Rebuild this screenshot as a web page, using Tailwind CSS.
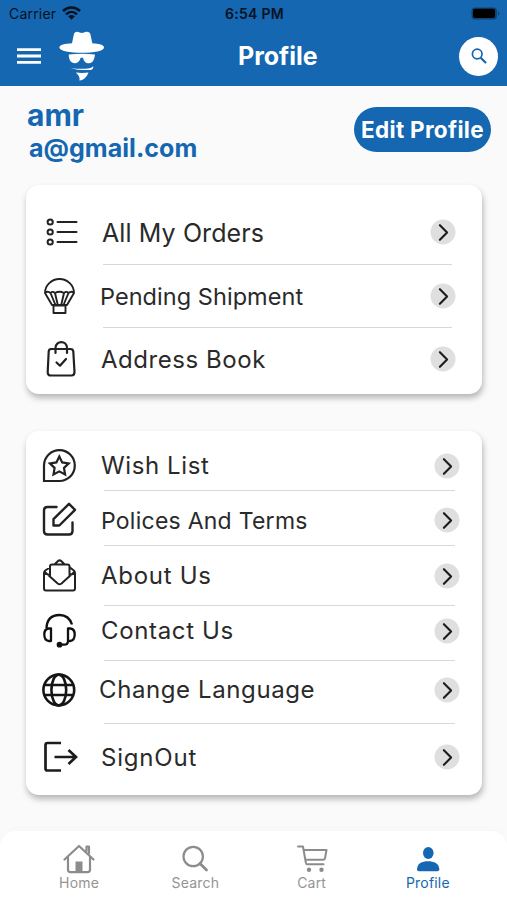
<!DOCTYPE html>
<html lang="en">
<head>
<meta charset="utf-8">
<title>Profile</title>
<script src="https://cdn.jsdelivr.net/npm/@tailwindcss/browser@4"></script>
</head>
<body class="w-[507px] h-[900px] overflow-hidden bg-[#fafafa] font-['Inter','Liberation_Sans',sans-serif] text-[#2a2a2a] flex flex-col">
<svg class="hidden">
  <symbol id="go" viewBox="0 0 26 26"><circle cx="13" cy="13" r="12.5" fill="#dfdfdf"/><path d="M9.6 6L16.8 13.3L9.6 20.6" transform="translate(.3 .2)" fill="none" stroke="#1c1c1c" stroke-width="2.1" stroke-linecap="round" stroke-linejoin="round"/></symbol>
</svg>

<header class="h-[86px] shrink-0 bg-[#1467b0] flex flex-col">
  <div class="h-7 flex items-center justify-between text-[#06121e]">
    <div class="w-[200px] pl-[9px] flex items-center gap-[6px]">
      <span class="text-[14px] leading-7 tracking-[0.2px]">Carrier</span>
      <svg class="w-[19px] h-[14px] -mt-[2px]" viewBox="0 0 19 14" fill="none" stroke="currentColor"><path d="M1 5C6 .3 13 .3 18 5" stroke-width="2.7"/><path d="M4 8.3C7.300 5.200 11.700 5.200 15 8.300" stroke-width="2.500"/><path d="M6.200 10.300Q9.500 7.700 12.800 10.300L9.500 13.700Z" fill="currentColor" stroke="none"/></svg>
    </div>
    <span class="pl-[2px] text-[14px] leading-7 font-semibold tracking-[0.300px]">6:54 PM</span>
    <div class="w-[200px] pr-[7px] flex justify-end">
      <svg class="w-[30px] h-[14px]" viewBox="0 0 30 14"><rect x="1.500" y=".5" width="25.500" height="12" rx="3.500" fill="#0d4476"/><rect x="3" y="1.800" width="22" height="9.200" rx="2" fill="#000"/><path d="M28 4.500v4q1.500-.5 1.500-2T28 4.500" fill="#0d4476"/></svg>
    </div>
  </div>
  <div class="h-[56px] flex items-center pl-[17px] pr-[9px]">
    <div class="w-[221px] flex items-center gap-[18px]">
      <svg class="w-6 h-[18px]" viewBox="0 0 24 18" fill="#fff"><path d="M0 1.200h24v2.800H0zM0 7.600h24v2.800H0zM0 14h24v2.800H0z"/></svg>
      <svg class="w-[46px] h-[50px] -mt-[1px]" viewBox="0 0 46 50" fill="#fff">
        <path d="M14.700 4C15.100 1.500 16.200.8 18.500.8Q23 3.100 27 .8C29.600.6 31.200 1.600 31.600 4L33.300 12.300C40 12.600 45 14 45 16.500C45 20 35 21.800 23 21.800S.4 20 .4 16.500C.4 14 6 12.600 13 12.300Z"/>
        <path d="M9.700 23.500Q23 22 36 23.500L35.500 26.500C34.500 31 31.500 33 28.500 32.200C25.500 31.500 24.500 29 24 26.700H21.600C21 29.500 19.500 31.700 16.500 32.200C13 32.500 10.700 30.500 10 26.500Z"/>
        <path d="M11.300 36.900Q23 38.500 30.500 37.200Q33 36.600 34.200 35.200C34.600 38.300 32.500 39 30 39Q20 39.600 11.300 36.900Z"/>
        <path d="M16.800 41.600Q23 42.500 29.500 41.600C28 45.600 24.500 49.800 20.400 49.600Q21.500 46 16.800 41.600Z"/>
      </svg>
    </div>
    <h1 class="text-[25px] leading-8 font-bold text-white">Profile</h1>
    <div class="ml-auto">
      <button class="w-[39px] h-[39px] rounded-full bg-white flex items-center justify-center" aria-label="Search">
        <svg class="w-4 h-4 ml-px" viewBox="0 0 16 16" fill="none" stroke="#1467b0"><circle cx="6.200" cy="6" r="4.800" stroke-width="1.700"/><path d="M9.700 9.700L15 15" stroke-width="2.200"/></svg>
      </button>
    </div>
  </div>
</header>

<section class="h-[99px] shrink-0 flex justify-between pl-[27px] pr-[16px] text-[#1467b0]">
  <div class="pt-[12px]">
    <p class="text-[30px] leading-[34px] font-bold">amr</p>
    <p class="text-[25px] leading-[32px] font-bold pl-[2px] tracking-[0.050px]">a@gmail.com</p>
  </div>
  <button class="mt-[21px] w-[137px] h-[45px] rounded-full bg-[#1467b0] text-white text-[22.500px] font-bold tracking-[0.300px] whitespace-nowrap flex items-center justify-center pt-[1px]">Edit Profile</button>
</section>

<main class="px-[26px] shrink-0 text-[24px] leading-8 whitespace-nowrap">
  <section class="h-[209px] w-[455.500px] rounded-[13px] bg-white shadow-[1px_4px_6px_rgba(0,0,0,0.28)] pl-[16px] pr-[26px]">
    <div class="h-[79px] pt-[15px] flex items-center">
      <svg class="w-9 h-9" viewBox="0 0 36 36" fill="none" stroke="#222" stroke-width="2"><circle cx="8.200" cy="8" r="2.600"/><circle cx="8.200" cy="18" r="2.600"/><circle cx="8.200" cy="28" r="2.600"/><path d="M15.500 8H34.500M15.500 18H34.500M15.500 28H34.500" stroke-linecap="round"/></svg>
      <span class="ml-[24px] pt-[2px] grow text-[25px] tracking-[0.100px]">All My Orders</span>
      <svg class="w-[26px] h-[26px]"><use href="#go"/></svg>
    </div>
    <div class="h-px ml-[61px] mr-[4px] bg-[#d8d8d8]"></div>
    <div class="h-[62px] flex items-center">
      <svg class="w-9 h-9" viewBox="0 0 36 36" fill="none" stroke="#222" stroke-width="1.900" stroke-linejoin="round"><path d="M3 15A14.500 14 0 0 1 32 15L25 27H10ZM3 15Q5.500 12.500 8.500 15Q10.500 12.700 13 15Q17.500 12.500 22 15Q24.500 12.700 26.500 15Q29.500 12.500 32 15M8.500 15L13.500 27M13 15L15.800 27M22 15L19.200 27M26.500 15L21.500 27M11.500 27.500H23.500V35H11.500Z"/></svg>
      <span class="ml-[22px] pt-[1px] grow text-[23.500px] tracking-[0.050px]">Pending Shipment</span>
      <svg class="w-[26px] h-[26px]"><use href="#go"/></svg>
    </div>
    <div class="h-px ml-[61px] mr-[4px] bg-[#d8d8d8]"></div>
    <div class="h-[62px] flex items-center">
      <svg class="w-9 h-9" viewBox="0 0 36 36" fill="none" stroke="#222" stroke-width="2.200" stroke-linecap="round" stroke-linejoin="round"><path d="M9 8H28.500Q31 8 31.300 10.500L32.500 31Q32.500 34.500 29.500 34.500H9Q5.500 34.500 5.700 31L6.700 10.500Q7 8 9 8ZM13.500 12V7C13.500-.8 25 -.8 25 7V12M14.500 21.500L18 24.700L24 18"/></svg>
      <span class="ml-[23px] pt-[1px] grow tracking-[0.550px]">Address Book</span>
      <svg class="w-[26px] h-[26px]"><use href="#go"/></svg>
    </div>
  </section>

  <section class="mt-[37px] h-[364px] w-[455.500px] rounded-[13px] bg-white shadow-[1px_4px_6px_rgba(0,0,0,0.28)] pl-[16px] pr-[22px]">
    <div class="h-[59px] pt-[10px] flex items-center">
      <svg class="w-9 h-9" viewBox="0 0 36 36" fill="none" stroke="#222" stroke-width="2.200" stroke-linejoin="miter"><path d="M2 33V17.200A15.400 15.400 0 1 1 17.400 33Z"/><path d="M17.300 8.500L20.200 14.400L26.700 15.400L22 20L23.100 26.500L17.300 23.400L11.500 26.500L12.600 20L7.900 15.400L14.400 14.400Z"/></svg>
      <span class="ml-[23px] pt-[1px] grow tracking-[0.600px]">Wish List</span>
      <svg class="w-[26px] h-[26px]"><use href="#go"/></svg>
    </div>
    <div class="h-px ml-[62px] mr-[5px] bg-[#d8d8d8]"></div>
    <div class="h-[54px] pt-[4px] flex items-center">
      <svg class="w-9 h-9" viewBox="0 0 36 36" fill="none" stroke="#222" stroke-width="2.400" stroke-linejoin="round" stroke-linecap="round"><path d="M14.500 5H5.500Q2 5 2 8.500V29Q2 32.500 5.500 32.500H27Q30.500 32.500 30.500 29V20.500M11.500 23.500V17.200L27 1.800L33 7.800L17.300 23.500Z"/></svg>
      <span class="ml-[23px] pt-[2px] grow text-[23px] tracking-[0.250px]">Polices And Terms</span>
      <svg class="w-[26px] h-[26px]"><use href="#go"/></svg>
    </div>
    <div class="h-px ml-[62px] mr-[5px] bg-[#d8d8d8]"></div>
    <div class="h-[59px] flex items-center">
      <svg class="w-9 h-9" viewBox="0 0 36 36" fill="none" stroke="#222" stroke-width="2" stroke-linejoin="round"><path d="M2 15V30.500Q2 32.500 4 32.500H31Q33 32.500 33 30.500V15Q33 13.500 31.800 12.500L28 9.500M8 9.500L3.200 12.500Q2 13.500 2 15L8 17.200M33 15L27.500 17.200M8 18.500V8.500Q8 6.500 10 6.500H25.500Q27.500 6.500 27.500 8.500V18.500M2.500 13.800L15.700 25.500Q17.600 27 19.500 25.500L32.500 13.800M12.500 6.500L16 3Q17.600 1.700 19.200 3L22.700 6.500"/></svg>
      <span class="ml-[23px] pt-[1px] grow tracking-[0.700px]">About Us</span>
      <svg class="w-[26px] h-[26px]"><use href="#go"/></svg>
    </div>
    <div class="h-px ml-[62px] mr-[5px] bg-[#d8d8d8]"></div>
    <div class="h-[54px] pb-[5px] flex items-center">
      <svg class="w-9 h-9" viewBox="0 0 36 36" fill="none" stroke="#111" stroke-width="2.300" stroke-linejoin="round"><path d="M4.500 15C5 6 10 2 17.500 2C24 2 28 5.500 30 11.500M9 15.500H6.500Q2.300 16 2.300 21.500T6.500 28H9ZM26 15.500H28.500Q32.700 16 32.700 21.500T28.500 28H26ZM26 28Q26 31.700 22 31.700H18"/><circle cx="17.500" cy="31.700" r="1.700" fill="#111"/></svg>
      <span class="ml-[23px] pt-[1px] grow tracking-[0.650px]">Contact Us</span>
      <svg class="w-[26px] h-[26px]"><use href="#go"/></svg>
    </div>
    <div class="h-px ml-[62px] mr-[5px] bg-[#d8d8d8]"></div>
    <div class="h-[62px] pb-[5px] flex items-center">
      <svg class="w-9 h-9" viewBox="0 0 36 36" fill="none" stroke="#151515" stroke-width="2.600"><circle cx="16.800" cy="18" r="15.400"/><ellipse cx="16.800" cy="18" rx="7.400" ry="15.400"/><path d="M2 13H31.600M2 23H31.600"/></svg>
      <span class="ml-[21px] pt-[1px] grow tracking-[0.600px]">Change Language</span>
      <svg class="w-[26px] h-[26px]"><use href="#go"/></svg>
    </div>
    <div class="h-px ml-[62px] mr-[5px] bg-[#d8d8d8]"></div>
    <div class="h-[72px] pb-[6px] flex items-center">
      <svg class="w-9 h-9" viewBox="0 0 36 36" fill="none" stroke="#1c1c1c" stroke-width="2.700"><path d="M19 4H5.500Q3.500 4 3.500 6V29.500Q3.500 31.500 5.500 31.500H19M12.500 18H34M26.500 11L34 18L26.500 25"/></svg>
      <span class="ml-[23px] pt-[1px] grow tracking-[0.800px]">SignOut</span>
      <svg class="w-[26px] h-[26px]"><use href="#go"/></svg>
    </div>
  </section>
</main>

<nav class="mt-auto h-[69px] shrink-0 bg-white rounded-t-[16px] shadow-[0_-2px_8px_rgba(0,0,0,0.015)] px-[21px] grid grid-cols-4 text-[14px] leading-[18px] tracking-[0.200px] text-[#949494]">
  <div class="flex flex-col items-center pt-[11px]">
    <svg class="w-8 h-8" viewBox="0 0 32 32" fill="none" stroke="#8c8c8c" stroke-width="2.200" stroke-linejoin="round" stroke-linecap="round"><path d="M1.500 17.500L16 4L30.500 17.500M5 15.500V27.500Q5 30.200 7.500 30.200H24.500Q27 30.200 27 27.500V15.500M23.500 9V4.500H26V11.500"/><path d="M12.500 19.500H19.500V30H12.500Z" fill="#8c8c8c" stroke="none"/></svg>
    <span>Home</span>
  </div>
  <div class="flex flex-col items-center pt-[11px]">
    <svg class="w-8 h-8" viewBox="0 0 32 32" fill="none" stroke="#8c8c8c" stroke-linecap="round"><circle cx="14.200" cy="14.500" r="9.700" stroke-width="2.200"/><path d="M21 21.500L27.500 28" stroke-width="2.800"/></svg>
    <span>Search</span>
  </div>
  <div class="flex flex-col items-center pt-[11px]">
    <svg class="w-8 h-8" viewBox="0 0 32 32" fill="none" stroke="#8c8c8c" stroke-width="2" stroke-linecap="round" stroke-linejoin="round"><path d="M2 4.500H7L9.800 20.500Q10 22.300 11.500 22.300H27.500M7.500 8H30.500L29 16.200Q28.700 17.700 27 17.700H9.700"/><circle cx="13" cy="27.800" r="1.200" fill="#8c8c8c"/><circle cx="25.500" cy="27.800" r="1.200" fill="#8c8c8c"/></svg>
    <span>Cart</span>
  </div>
  <div class="flex flex-col items-center pt-[11px] text-[#1467b0]">
    <svg class="w-8 h-8" viewBox="0 0 32 32" fill="#1467b0"><ellipse cx="16.300" cy="11" rx="5.300" ry="5.900"/><path d="M5 27.500C5 21.500 10 19.300 16 19.300S27.300 21.500 27.300 27.500Q27.300 29.300 25.500 29.300H7Q5 29.300 5 27.500Z"/></svg>
    <span>Profile</span>
  </div>
</nav>
</body>
</html>
